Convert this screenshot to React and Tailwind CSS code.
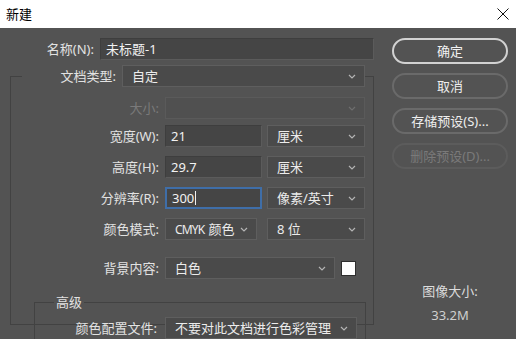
import React from "react";

function Chevron({ className = "" }) {
  return (
    <svg width="8" height="5" viewBox="0 0 8 5" className={className}>
      <path d="M1 1 L4 4 L7 1" fill="none" stroke="#b4b4b4" strokeWidth="1.2" />
    </svg>
  );
}

function Select({ value, className = "", disabled = false, textClass = "" }) {
  return (
    <div
      className={`h-[22px] flex items-center justify-between pl-[9px] pr-[8px] border ${
        disabled ? "bg-[#505050] border-[#5a5a5a]" : "bg-[#4a4a4a] border-[#5e5e5e]"
      } ${className}`}
    >
      <span className={`text-[13px] text-[#ececec] whitespace-nowrap ${textClass}`}>{value}</span>
      <Chevron className={disabled ? "opacity-30" : ""} />
    </div>
  );
}

function Input({ value, className = "", focused = false }) {
  return (
    <div
      className={`h-[22px] flex items-center pl-[5px] ${
        focused
          ? "bg-[#454545] border-2 border-[#3f6ea8]"
          : "bg-[#454545] border border-[#5b5b5b] border-t-[#3e3e3e] border-l-[#3e3e3e]"
      } ${className}`}
    >
      <span className="text-[13px] text-[#f2f2f2] whitespace-nowrap">{value}</span>
      {focused && <span className="w-px h-[14px] bg-[#f0f0f0] ml-px" />}
    </div>
  );
}

function Label({ children, className = "", disabled = false }) {
  return (
    <div
      className={`text-right text-[13px] whitespace-nowrap pr-[6px] shrink-0 ${
        disabled ? "text-[#7a7a7a]" : "text-[#e2e2e2]"
      } ${className}`}
    >
      {children}
    </div>
  );
}

function Button({ children, variant = "normal" }) {
  const styles = {
    default: "border-2 border-[#d2d2d2] text-[#f2f2f2]",
    normal: "border-2 border-[#6a6a6a] text-[#eeeeee]",
    disabled: "border-2 border-[#5c5c5c] text-[#7a7a7a]",
  };
  return (
    <div
      className={`w-[116px] h-[26px] rounded-full flex items-center justify-center text-[13px] ${styles[variant]}`}
    >
      {children}
    </div>
  );
}

export default function App() {
  return (
    <div className="w-[516px] h-[339px] overflow-hidden bg-[#535353] font-['Noto_Sans','Noto_Sans_CJK_SC',sans-serif] leading-none">
      {/* Title bar */}
      <div className="h-[28px] bg-white flex items-center justify-between pl-[6px] pr-[6px]">
        <span className="text-[13px] text-black">新建</span>
        <svg width="12" height="12" viewBox="0 0 12 12" className="mr-[1px]">
          <path d="M0.5 0.5 L11.5 11.5 M11.5 0.5 L0.5 11.5" stroke="#111" strokeWidth="1" />
        </svg>
      </div>

      <div className="flex">
        {/* Left form */}
        <div className="w-[374px] pt-[10px] shrink-0">
          <div className="flex items-center">
            <Label className="w-[100px] pr-[5px]">名称(N):</Label>
            <Input value="未标题-1" className="w-[274px]" />
          </div>

          <fieldset className="ml-[10px] mt-[5px] w-[364px] border border-[#424242] h-[260px] pb-0">
            <legend className="ml-[11px] flex items-center p-0">
              <Label className="w-[100px] pr-[5px]">文档类型:</Label>
              <Select value="自定" className="w-[243px]" />
            </legend>

            <div className="flex items-center mt-[10px]">
              <Label className="w-[154px]" disabled>大小:</Label>
              <Select value="" className="w-[200px]" disabled />
            </div>

            <div className="flex items-center mt-[6px]">
              <Label className="w-[154px]">宽度(W):</Label>
              <Input value="21" className="w-[97px]" />
              <Select value="厘米" className="w-[98px] ml-[5px]" />
            </div>

            <div className="flex items-center mt-[9px]">
              <Label className="w-[154px]">高度(H):</Label>
              <Input value="29.7" className="w-[97px]" />
              <Select value="厘米" className="w-[98px] ml-[5px]" />
            </div>

            <div className="flex items-center mt-[9px]">
              <Label className="w-[154px]">分辨率(R):</Label>
              <Input value="300" className="w-[97px]" focused />
              <Select value="像素/英寸" className="w-[98px] ml-[5px]" />
            </div>

            <div className="flex items-center mt-[9px]">
              <Label className="w-[154px]">颜色模式:</Label>
              <Select
                value={
                  <>
                    <span className="tracking-[-0.8px] text-[12px]">CMYK</span>
                    <span className="ml-[4px]">颜色</span>
                  </>
                }
                className="w-[92px]"
              />
              <Select value="8 位" className="w-[98px] ml-[10px]" />
            </div>

            <div className="flex items-center mt-[17px]">
              <Label className="w-[154px]">背景内容:</Label>
              <Select value="白色" className="w-[170px]" />
              <div className="w-[15px] h-[15px] bg-white border border-[#2e2e2e] ml-[6px]" />
            </div>

            <fieldset className="ml-[23px] mt-[17px] w-[332px] border border-[#424242] h-[60px]">
              <legend className="ml-[19px] px-[2px] text-[13px] text-[#e2e2e2]">高级</legend>
              <div className="flex items-center mt-[8px]">
                <Label className="w-[130px] pr-[8px]">颜色配置文件:</Label>
                <Select value="不要对此文档进行色彩管理" className="w-[192px]" />
              </div>
            </fieldset>
          </fieldset>
        </div>

        {/* Right column */}
        <div className="flex flex-col pl-[18px] pt-[10px] gap-[9px]">
          <Button variant="default">确定</Button>
          <Button>取消</Button>
          <Button>存储预设(S)...</Button>
          <Button variant="disabled">删除预设(D)...</Button>
          <div className="mt-[107px] w-[116px] flex flex-col items-center gap-[11px]">
            <span className="text-[13px] text-[#dcdcdc]">图像大小:</span>
            <span className="text-[13px] text-[#cfcfcf]">33.2M</span>
          </div>
        </div>
      </div>
    </div>
  );
}
